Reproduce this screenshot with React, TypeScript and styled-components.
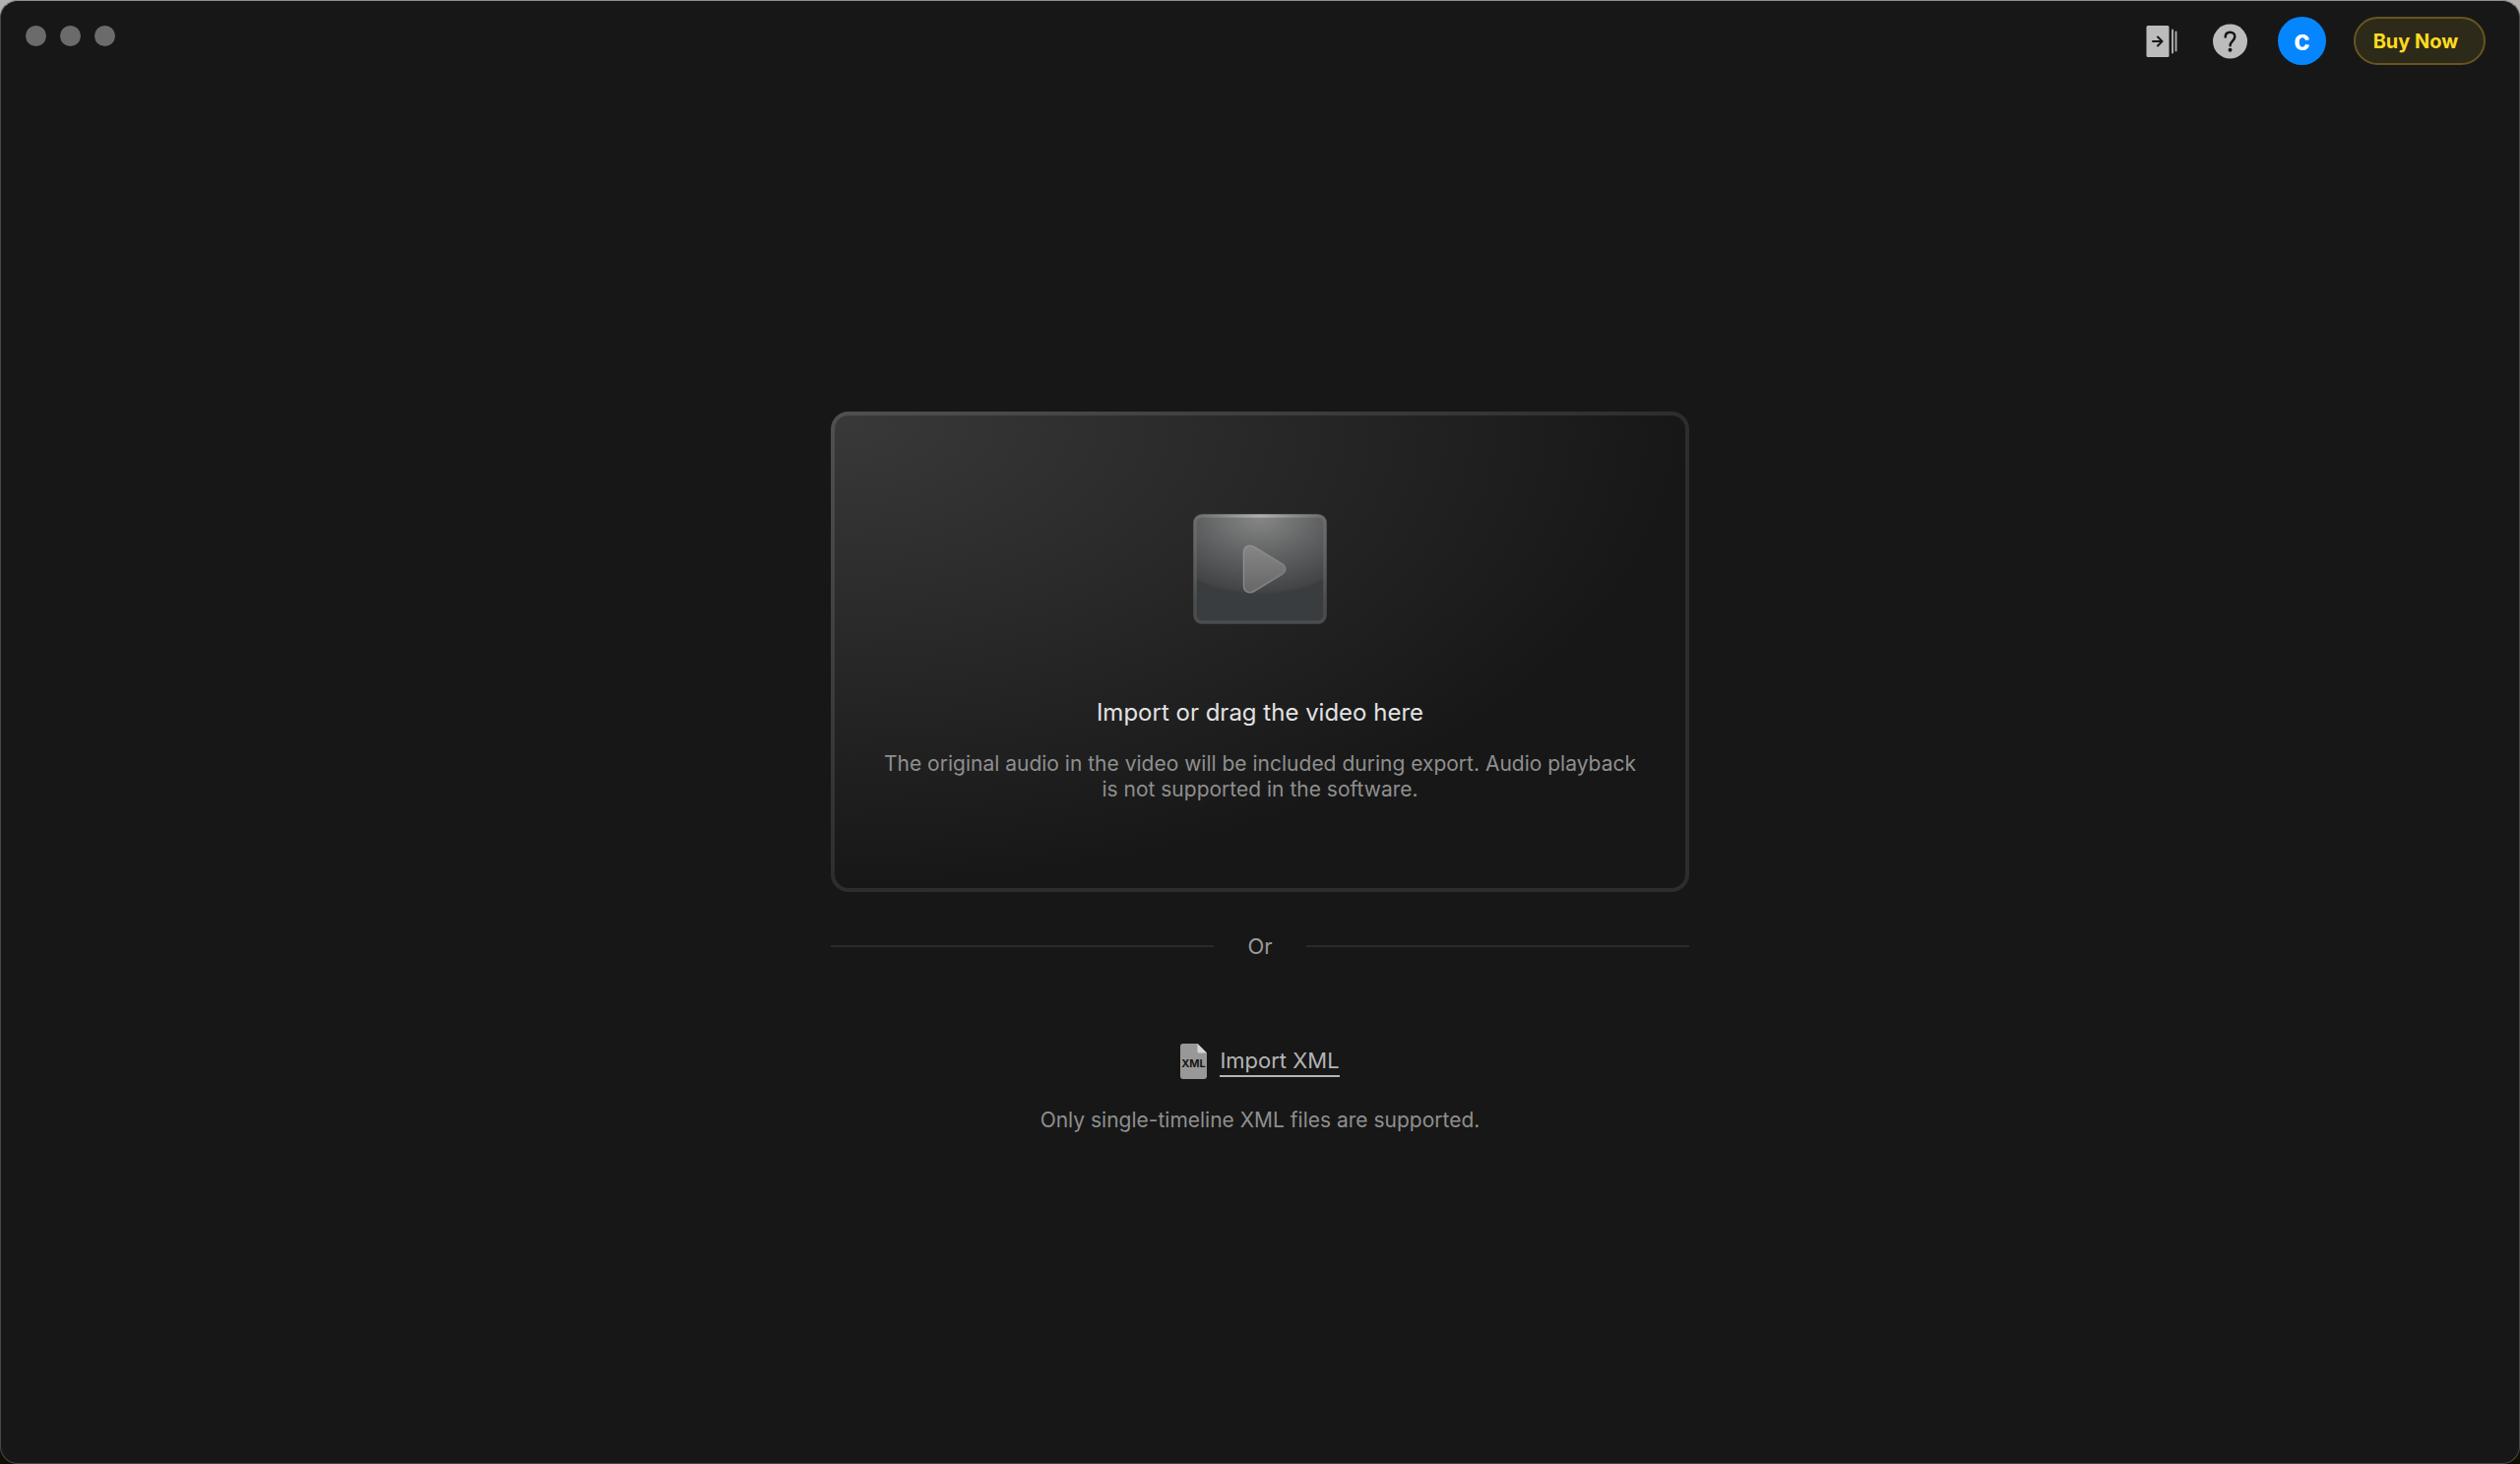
import React from "react";
import styled, { createGlobalStyle } from "styled-components";

const GlobalStyle = createGlobalStyle`
  * { box-sizing: border-box; }
  body {
    margin: 0;
    background: linear-gradient(#b4b0ae 0 50%, #0e1004 50% 100%);
    font-family: Inter, "Liberation Sans", sans-serif;
  }
  button { font: inherit; color: inherit; border: 0; padding: 0; background: none; cursor: pointer; }
`;

const AppWindow = styled.div`
  display: flex;
  flex-direction: column;
  min-height: 100vh;
  border: 1px solid #484848;
  border-top-color: #8e8e8e;
  border-radius: 18px;
  background: #171717;
`;

const TitleBar = styled.header`
  display: flex;
  justify-content: space-between;
  align-items: flex-start;
  padding: 16px 34px 16px 25px;
`;

const TrafficLights = styled.div`
  display: flex;
  gap: 14px;
  padding-top: 9px;
`;

const Light = styled.button`
  width: 21px;
  height: 21px;
  border-radius: 50%;
  background: #6b6b6b;
`;

const Actions = styled.nav`
  display: flex;
  align-items: center;
  gap: 28px;
`;

const IconButton = styled.button`
  display: flex;
  width: 40px;
  height: 40px;
`;

const Avatar = styled.button`
  width: 49px;
  height: 49px;
  border-radius: 50%;
  background: #0586ff;
  color: #fff;
  font-size: 28px;
  font-weight: 700;
  line-height: 49px;
`;

const BuyButton = styled.button`
  width: 134px;
  height: 49px;
  padding-right: 8px;
  border: 2px solid #665620;
  border-radius: 25px;
  background: #2e2a1a;
  color: #ffdb1f;
  font-size: 20px;
  font-weight: 700;
`;

const Main = styled.main`
  flex: 1;
  display: flex;
  flex-direction: column;
  align-items: center;
  justify-content: center;
`;

const DropZone = styled.button`
  display: flex;
  flex-direction: column;
  align-items: center;
  width: 100%;
  max-width: 872px;
  padding: 100px 40px 87px;
  border: 4px solid transparent;
  border-radius: 18px;
  background:
    radial-gradient(100% 100% at 0 0, #393939, #171717) padding-box,
    radial-gradient(100% 100% at 0 0, #505050, #2d2d2d) border-box;
`;

const Title = styled.span`
  margin-top: 74px;
  color: #e3e3e3;
  font-size: 24px;
  line-height: 32px;
`;

const Hint = styled.span`
  max-width: 772px;
  color: #8f8f8f;
  font-size: 21px;
  line-height: 26px;
`;

const ZoneHint = styled(Hint)`
  margin-top: 23px;
`;

const Divider = styled.div`
  display: flex;
  align-items: center;
  gap: 34px;
  width: 100%;
  max-width: 872px;
  margin-top: 39px;
  color: #9a9a9a;
  font-size: 22px;
  line-height: 32px;

  &::before,
  &::after {
    content: "";
    flex: 1;
    height: 2px;
    background: #2a2a2a;
  }
`;

const XmlButton = styled.button`
  display: flex;
  align-items: center;
  gap: 12px;
  height: 36px;
  margin: 83px 0 29px;
`;

const XmlLabel = styled.span`
  border-bottom: 2px solid #b4b4b4;
  color: #b4b4b4;
  font-size: 22px;
  line-height: 30px;
`;

const ImportListIcon = () => (
  <svg width="40" height="40" viewBox="0 0 40 40" aria-hidden="true">
    <rect x="2.5" y="4" width="23" height="32" rx="1.5" fill="#bcbcbc" />
    <rect x="28" y="7.5" width="2" height="25" rx="1" fill="#a8a8a8" />
    <rect x="31.5" y="9.5" width="2" height="21" rx="1" fill="#a8a8a8" />
    <path d="M9 20h9M14 15.5l4.500 4.500-4.500 4.500" fill="none" stroke="#171717" strokeWidth="2" strokeLinecap="round" strokeLinejoin="round" />
  </svg>
);

const HelpIcon = () => (
  <svg width="40" height="40" viewBox="0 0 40 40" aria-hidden="true">
    <circle cx="19.5" cy="20" r="17.5" fill="#bcbcbc" />
    <path d="M14.7 15.5c0-3 1.900-4.800 4.800-4.800s4.800 1.900 4.800 4.500c0 4-4.700 4.700-4.700 9" fill="none" stroke="#171717" strokeWidth="2.500" strokeLinecap="round" />
    <circle cx="19.5" cy="28.7" r="2" fill="#171717" />
  </svg>
);

const VideoIcon = () => (
  <svg width="136" height="112" viewBox="0 0 136 112" aria-hidden="true">
    <defs>
      <radialGradient id="glow" gradientUnits="userSpaceOnUse" cx="0" cy="0" r="1" gradientTransform="translate(68 2) scale(116 80)">
        <stop offset="0" stopColor="#868786" />
        <stop offset="0.5" stopColor="#626364" />
        <stop offset="0.96" stopColor="#424445" />
        <stop offset="1" stopColor="#3a3d3f" />
      </radialGradient>
      <radialGradient id="edge" gradientUnits="userSpaceOnUse" cx="68" cy="0" r="110">
        <stop offset="0" stopColor="#b0b0b0" />
        <stop offset="0.6" stopColor="#6a6a6b" />
        <stop offset="1" stopColor="#4b4c4e" />
      </radialGradient>
      <linearGradient id="play" x1="0" y1="0" x2="0" y2="1">
        <stop offset="0" stopColor="#868686" />
        <stop offset="1" stopColor="#676768" />
      </linearGradient>
      <linearGradient id="playEdge" x1="0" y1="0" x2="1" y2="1">
        <stop offset="0" stopColor="#929292" />
        <stop offset="1" stopColor="#777777" />
      </linearGradient>
    </defs>
    <rect x="2" y="2" width="132" height="108" rx="7" fill="url(#glow)" stroke="url(#edge)" strokeWidth="3.5" />
    <path d="M51.500 39c0-6 5.500-8.500 10.500-5.500l28 17c5 3 5 8 0 11L62 78.500c-5 3-10.500 .5-10.500-5.500z" fill="url(#play)" stroke="url(#playEdge)" strokeWidth="1.5" />
  </svg>
);

const XmlFileIcon = () => (
  <svg width="28" height="36" viewBox="0 0 28 36" aria-hidden="true">
    <path d="M3 0h14.500L27 9.500V33a3 3 0 0 1-3 3H3a3 3 0 0 1-3-3V3a3 3 0 0 1 3-3z" fill="#989898" />
    <path d="M17.500 0L27 9.500h-8a1.500 1.500 0 0 1-1.500-1.500z" fill="#d6d6d6" />
    <text x="13.5" y="24" textAnchor="middle" fontSize="11" fontWeight="700" fill="#171717">XML</text>
  </svg>
);

export default function App() {
  return (
    <>
      <GlobalStyle />
      <AppWindow>
        <TitleBar>
          <TrafficLights>
            <Light aria-label="Close" />
            <Light aria-label="Minimize" />
            <Light aria-label="Zoom" />
          </TrafficLights>
          <Actions>
            <IconButton aria-label="Import list"><ImportListIcon /></IconButton>
            <IconButton aria-label="Help"><HelpIcon /></IconButton>
            <Avatar aria-label="Account">c</Avatar>
            <BuyButton>Buy Now</BuyButton>
          </Actions>
        </TitleBar>
        <Main>
          <DropZone>
            <VideoIcon />
            <Title>Import or drag the video here</Title>
            <ZoneHint>
              The original audio in the video will be included during export. Audio playback is not supported in the software.
            </ZoneHint>
          </DropZone>
          <Divider>Or</Divider>
          <XmlButton>
            <XmlFileIcon />
            <XmlLabel>Import XML</XmlLabel>
          </XmlButton>
          <Hint>Only single-timeline XML files are supported.</Hint>
        </Main>
      </AppWindow>
    </>
  );
}
